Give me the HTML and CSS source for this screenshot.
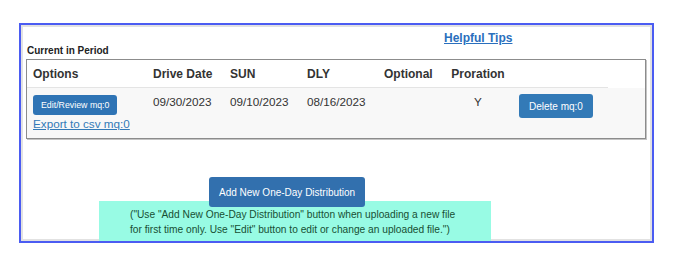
FILE: index.html
```html
<!DOCTYPE html>
<html lang="en">
<head>
    <meta charset="UTF-8">
    <title>One-Day Distribution</title>
    <link rel="stylesheet" href="styles.css">
</head>
<body>

    <div class="frame">
        <div class="tips-row">
            <a href="#" class="tips">Helpful Tips</a>
        </div>
        <div class="period-label">Current in Period</div>

        <div class="grid-box">
            <table class="grid">
                <colgroup>
                    <col class="c-options">
                    <col class="c-date">
                    <col class="c-date">
                    <col class="c-date">
                    <col class="c-optional">
                    <col class="c-proration">
                    <col class="c-delete">
                    <col>
                </colgroup>
                <thead>
                    <tr>
                        <th>Options</th>
                        <th>Drive Date</th>
                        <th>SUN</th>
                        <th>DLY</th>
                        <th>Optional</th>
                        <th class="center">Proration</th>
                        <th></th>
                        <th class="blank"></th>
                    </tr>
                </thead>
                <tbody>
                    <tr>
                        <td>
                            <button class="btn btn-xs">Edit/Review mq:0</button>
                            <a href="#" class="export">Export to csv mq:0</a>
                        </td>
                        <td>09/30/2023</td>
                        <td>09/10/2023</td>
                        <td>08/16/2023</td>
                        <td></td>
                        <td class="center">Y</td>
                        <td><button class="btn btn-sm">Delete mq:0</button></td>
                        <td></td>
                    </tr>
                </tbody>
            </table>
        </div>

        <button class="btn btn-add">Add New One-Day Distribution</button>
        <div class="note">
            ("Use "Add New One-Day Distribution" button when uploading a new file<br>
            for first time only. Use "Edit" button to edit or change an uploaded file.")
        </div>
    </div>

</body>
</html>
```

FILE: styles.css
```css
body {
    margin: 0;
    background-color: #ffffff;
    font-family: "Liberation Sans", Arial, sans-serif;
    color: #333333;
}

.frame {
    margin: 23px 0 0 19px;
    width: 631px;
    height: 216px;
    border: 2px solid #4b5cf2;
    box-shadow: inset 0 0 0 2px #e2e2e2;
}

.tips-row {
    padding: 5px 0 0 423px;
    height: 15px;
    line-height: 14px;
}

.tips {
    font-size: 12px;
    font-weight: bold;
    color: #2a6fbd;
}

.period-label {
    margin-left: 6px;
    font-size: 10px;
    font-weight: bold;
    line-height: 12px;
    color: #222222;
}

.grid-box {
    margin: 2px 0 0 5px;
    width: 618px;
    border: 1px solid #8c8c8c;
    box-shadow: 1px 1px 0 #c4c4c4;
}

.grid {
    width: 100%;
    border-collapse: collapse;
    table-layout: fixed;
    font-size: 11.7px;
}

.c-options { width: 120px; }
.c-date { width: 77px; }
.c-optional { width: 65px; }
.c-proration { width: 70px; }
.c-delete { width: 95px; }

.grid th {
    height: 27px;
    padding: 0 6px;
    text-align: left;
    font-size: 12px;
    border-bottom: 1px solid #e4e4e4;
}

.grid th.blank {
    border-bottom: none;
}

.grid td {
    height: 36px;
    padding: 7px 6px;
    vertical-align: top;
    background-color: #f8f8f8;
    line-height: 14px;
}

.grid .center {
    text-align: center;
}

.btn {
    border: none;
    border-radius: 3px;
    background-color: #337ab7;
    color: #ffffff;
    font-family: "Liberation Sans", Arial, sans-serif;
    cursor: pointer;
}

.btn-xs {
    display: block;
    height: 20px;
    padding: 0 8px;
    font-size: 8.8px;
    background-color: #2f74b5;
}

.btn-sm {
    height: 24px;
    padding: 0 10px;
    font-size: 10px;
    margin-top: -1px;
}

.export {
    display: block;
    margin-top: 2px;
    color: #337ab7;
}

.btn-add {
    position: relative;
    z-index: 1;
    display: block;
    margin: 38px 0 -6px 188px;
    height: 30px;
    padding: 0 10px;
    font-size: 10px;
    background-color: #3270ae;
}

.note {
    margin-left: 78px;
    width: 392px;
    height: 40px;
    padding: 6px 0 0 31px;
    box-sizing: border-box;
    background-color: #98fbe4;
    color: #174f33;
    font-size: 10.2px;
    line-height: 15px;
}
```
